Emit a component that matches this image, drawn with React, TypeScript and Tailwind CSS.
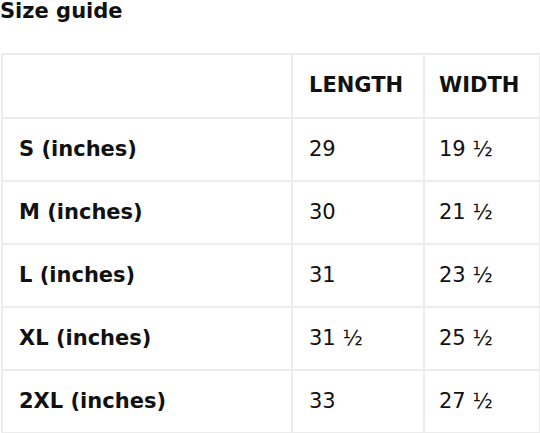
export default function App() {
  const rows = [
    ["S (inches)", "29", "19 ½"],
    ["M (inches)", "30", "21 ½"],
    ["L (inches)", "31", "23 ½"],
    ["XL (inches)", "31 ½", "25 ½"],
    ["2XL (inches)", "33", "27 ½"],
  ];

  return (
    <div className="w-[540px] h-[433px] bg-white text-[#111] font-['DejaVu_Sans',sans-serif] text-[21px] overflow-hidden">
      <h2 className="font-bold leading-[22px]">Size guide</h2>
      <table className="mt-[31px] ml-px w-[538px] table-fixed border-collapse">
        <colgroup>
          <col className="w-[290px]" />
          <col className="w-[132px]" />
          <col className="w-[116px]" />
        </colgroup>
        <thead>
          <tr className="h-[64px]">
            <th className="border-2 border-[#ececec]"></th>
            <th className="border-2 border-[#ececec] px-[16px] text-left font-bold">LENGTH</th>
            <th className="border-2 border-[#ececec] px-[14px] text-left font-bold">WIDTH</th>
          </tr>
        </thead>
        <tbody>
          {rows.map((r) => (
            <tr key={r[0]} className="h-[63px]">
              <td className="border-2 border-[#ececec] px-[16px] font-bold">{r[0]}</td>
              <td className="border-2 border-[#ececec] px-[16px]">{r[1]}</td>
              <td className="border-2 border-[#ececec] px-[14px]">{r[2]}</td>
            </tr>
          ))}
        </tbody>
      </table>
    </div>
  );
}
